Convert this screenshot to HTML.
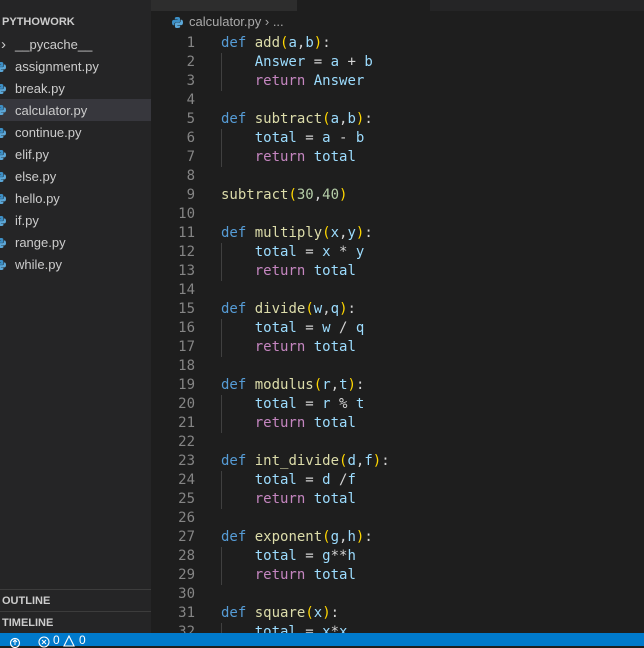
<!DOCTYPE html>
<html><head><meta charset="utf-8"><style>
*{margin:0;padding:0;box-sizing:border-box}
body{width:644px;height:646px;overflow:hidden;background:#1e1e1e;position:relative;font-family:"Liberation Sans",sans-serif}
#side{position:absolute;left:0;top:0;width:151px;height:633px;background:#252526}
.row{position:absolute;left:0;width:151px;height:22px;line-height:22px;font-size:13px;color:#cccccc;padding-left:15px;white-space:nowrap;margin-top:1px}
.row.sel{background:#37373d;margin-top:0;line-height:23px}
.hdr{position:absolute;left:2px;font-size:11px;font-weight:bold;color:#cccccc;line-height:22px}
.py{position:absolute;left:-4px;top:6px}
.line{position:absolute;left:0;width:151px;height:1px;background:#3c3c3c}
#tabs{position:absolute;left:151px;top:0;width:493px;height:11px;background:#252526}
#tab{position:absolute;left:151px;top:0;width:146px;height:11px;background:#2d2d2d}
#tab2{position:absolute;left:297px;top:0;width:133px;height:11px;background:#1e1e1e}
#crumb{position:absolute;left:172px;top:13px;font-size:13px;color:#a9a9a9;line-height:18px}
#code{position:absolute;left:0;top:34px;font-family:"DejaVu Sans Mono","Liberation Mono",monospace;font-size:14px;line-height:19px}
.n{position:absolute;width:195px;text-align:right;color:#858585;height:19px}
.c{position:absolute;left:221px;color:#d4d4d4;white-space:pre}
.k{color:#569cd6}.f{color:#dcdcaa}.v{color:#9cdcfe}.p{color:#ffd700}.r{color:#c586c0}.m{color:#b5cea8}
.g{position:absolute;left:221px;width:1px;background:#404040;margin-top:1px}
#status{position:absolute;left:0;top:633px;width:644px;height:13px;background:#007acc;color:#fff;font-size:12px}
</style></head><body>
<div id="side">
<div class="hdr" style="top:11px">PYTHOWORK</div>
<div class="row" style="top:33px"><span style="position:absolute;left:1px;color:#ccc;font-size:15px">&#8250;</span>__pycache__</div>
<div class="row" style="top:55px"><svg class="py" width="10" height="10" viewBox="0 0 10 10"><path d="M5 0C2.5 0 2.6 1 2.6 1V2.2H5.1V2.6H1.6S0 2.4 0 5s1.4 2.5 1.4 2.5h.8V6.3s0-1.4 1.4-1.4h2.4s1.3 0 1.3-1.3V1.3S7.5 0 5 0z" fill="#3c8fc6"/><path d="M5 10c2.5 0 2.4-1 2.4-1V7.8H4.9V7.4h3.5S10 7.6 10 5s-1.4-2.5-1.4-2.5h-.8v1.2s0 1.4-1.4 1.4H4s-1.3 0-1.3 1.3v2.3S2.5 10 5 10z" fill="#5ba7d8"/></svg>assignment.py</div>
<div class="row" style="top:77px"><svg class="py" width="10" height="10" viewBox="0 0 10 10"><path d="M5 0C2.5 0 2.6 1 2.6 1V2.2H5.1V2.6H1.6S0 2.4 0 5s1.4 2.5 1.4 2.5h.8V6.3s0-1.4 1.4-1.4h2.4s1.3 0 1.3-1.3V1.3S7.5 0 5 0z" fill="#3c8fc6"/><path d="M5 10c2.5 0 2.4-1 2.4-1V7.8H4.9V7.4h3.5S10 7.6 10 5s-1.4-2.5-1.4-2.5h-.8v1.2s0 1.4-1.4 1.4H4s-1.3 0-1.3 1.3v2.3S2.5 10 5 10z" fill="#5ba7d8"/></svg>break.py</div>
<div class="row sel" style="top:99px"><svg class="py" width="10" height="10" viewBox="0 0 10 10"><path d="M5 0C2.5 0 2.6 1 2.6 1V2.2H5.1V2.6H1.6S0 2.4 0 5s1.4 2.5 1.4 2.5h.8V6.3s0-1.4 1.4-1.4h2.4s1.3 0 1.3-1.3V1.3S7.5 0 5 0z" fill="#3c8fc6"/><path d="M5 10c2.5 0 2.4-1 2.4-1V7.8H4.9V7.4h3.5S10 7.6 10 5s-1.4-2.5-1.4-2.5h-.8v1.2s0 1.4-1.4 1.4H4s-1.3 0-1.3 1.3v2.3S2.5 10 5 10z" fill="#5ba7d8"/></svg>calculator.py</div>
<div class="row" style="top:121px"><svg class="py" width="10" height="10" viewBox="0 0 10 10"><path d="M5 0C2.5 0 2.6 1 2.6 1V2.2H5.1V2.6H1.6S0 2.4 0 5s1.4 2.5 1.4 2.5h.8V6.3s0-1.4 1.4-1.4h2.4s1.3 0 1.3-1.3V1.3S7.5 0 5 0z" fill="#3c8fc6"/><path d="M5 10c2.5 0 2.4-1 2.4-1V7.8H4.9V7.4h3.5S10 7.6 10 5s-1.4-2.5-1.4-2.5h-.8v1.2s0 1.4-1.4 1.4H4s-1.3 0-1.3 1.3v2.3S2.5 10 5 10z" fill="#5ba7d8"/></svg>continue.py</div>
<div class="row" style="top:143px"><svg class="py" width="10" height="10" viewBox="0 0 10 10"><path d="M5 0C2.5 0 2.6 1 2.6 1V2.2H5.1V2.6H1.6S0 2.4 0 5s1.4 2.5 1.4 2.5h.8V6.3s0-1.4 1.4-1.4h2.4s1.3 0 1.3-1.3V1.3S7.5 0 5 0z" fill="#3c8fc6"/><path d="M5 10c2.5 0 2.4-1 2.4-1V7.8H4.9V7.4h3.5S10 7.6 10 5s-1.4-2.5-1.4-2.5h-.8v1.2s0 1.4-1.4 1.4H4s-1.3 0-1.3 1.3v2.3S2.5 10 5 10z" fill="#5ba7d8"/></svg>elif.py</div>
<div class="row" style="top:165px"><svg class="py" width="10" height="10" viewBox="0 0 10 10"><path d="M5 0C2.5 0 2.6 1 2.6 1V2.2H5.1V2.6H1.6S0 2.4 0 5s1.4 2.5 1.4 2.5h.8V6.3s0-1.4 1.4-1.4h2.4s1.3 0 1.3-1.3V1.3S7.5 0 5 0z" fill="#3c8fc6"/><path d="M5 10c2.5 0 2.4-1 2.4-1V7.8H4.9V7.4h3.5S10 7.6 10 5s-1.4-2.5-1.4-2.5h-.8v1.2s0 1.4-1.4 1.4H4s-1.3 0-1.3 1.3v2.3S2.5 10 5 10z" fill="#5ba7d8"/></svg>else.py</div>
<div class="row" style="top:187px"><svg class="py" width="10" height="10" viewBox="0 0 10 10"><path d="M5 0C2.5 0 2.6 1 2.6 1V2.2H5.1V2.6H1.6S0 2.4 0 5s1.4 2.5 1.4 2.5h.8V6.3s0-1.4 1.4-1.4h2.4s1.3 0 1.3-1.3V1.3S7.5 0 5 0z" fill="#3c8fc6"/><path d="M5 10c2.5 0 2.4-1 2.4-1V7.8H4.9V7.4h3.5S10 7.6 10 5s-1.4-2.5-1.4-2.5h-.8v1.2s0 1.4-1.4 1.4H4s-1.3 0-1.3 1.3v2.3S2.5 10 5 10z" fill="#5ba7d8"/></svg>hello.py</div>
<div class="row" style="top:209px"><svg class="py" width="10" height="10" viewBox="0 0 10 10"><path d="M5 0C2.5 0 2.6 1 2.6 1V2.2H5.1V2.6H1.6S0 2.4 0 5s1.4 2.5 1.4 2.5h.8V6.3s0-1.4 1.4-1.4h2.4s1.3 0 1.3-1.3V1.3S7.5 0 5 0z" fill="#3c8fc6"/><path d="M5 10c2.5 0 2.4-1 2.4-1V7.8H4.9V7.4h3.5S10 7.6 10 5s-1.4-2.5-1.4-2.5h-.8v1.2s0 1.4-1.4 1.4H4s-1.3 0-1.3 1.3v2.3S2.5 10 5 10z" fill="#5ba7d8"/></svg>if.py</div>
<div class="row" style="top:231px"><svg class="py" width="10" height="10" viewBox="0 0 10 10"><path d="M5 0C2.5 0 2.6 1 2.6 1V2.2H5.1V2.6H1.6S0 2.4 0 5s1.4 2.5 1.4 2.5h.8V6.3s0-1.4 1.4-1.4h2.4s1.3 0 1.3-1.3V1.3S7.5 0 5 0z" fill="#3c8fc6"/><path d="M5 10c2.5 0 2.4-1 2.4-1V7.8H4.9V7.4h3.5S10 7.6 10 5s-1.4-2.5-1.4-2.5h-.8v1.2s0 1.4-1.4 1.4H4s-1.3 0-1.3 1.3v2.3S2.5 10 5 10z" fill="#5ba7d8"/></svg>range.py</div>
<div class="row" style="top:253px"><svg class="py" width="10" height="10" viewBox="0 0 10 10"><path d="M5 0C2.5 0 2.6 1 2.6 1V2.2H5.1V2.6H1.6S0 2.4 0 5s1.4 2.5 1.4 2.5h.8V6.3s0-1.4 1.4-1.4h2.4s1.3 0 1.3-1.3V1.3S7.5 0 5 0z" fill="#3c8fc6"/><path d="M5 10c2.5 0 2.4-1 2.4-1V7.8H4.9V7.4h3.5S10 7.6 10 5s-1.4-2.5-1.4-2.5h-.8v1.2s0 1.4-1.4 1.4H4s-1.3 0-1.3 1.3v2.3S2.5 10 5 10z" fill="#5ba7d8"/></svg>while.py</div>
<div class="line" style="top:589px"></div>
<div class="hdr" style="top:590px">OUTLINE</div>
<div class="line" style="top:611px"></div>
<div class="hdr" style="top:612px">TIMELINE</div>
</div>
<div id="tabs"></div><div id="tab"></div><div id="tab2"></div>
<div id="crumb"><svg width="11" height="11" viewBox="0 0 10 10" style="position:absolute;left:0;top:4px"><path d="M5 0C2.5 0 2.6 1 2.6 1V2.2H5.1V2.6H1.6S0 2.4 0 5s1.4 2.5 1.4 2.5h.8V6.3s0-1.4 1.4-1.4h2.4s1.3 0 1.3-1.3V1.3S7.5 0 5 0z" fill="#3c8fc6"/><path d="M5 10c2.5 0 2.4-1 2.4-1V7.8H4.9V7.4h3.5S10 7.6 10 5s-1.4-2.5-1.4-2.5h-.8v1.2s0 1.4-1.4 1.4H4s-1.3 0-1.3 1.3v2.3S2.5 10 5 10z" fill="#5ba7d8"/></svg><span style="margin-left:17px">calculator.py &#8250; ...</span></div>
<div class="g" style="top:52px;height:38px"></div>
<div class="g" style="top:128px;height:38px"></div>
<div class="g" style="top:242px;height:38px"></div>
<div class="g" style="top:318px;height:38px"></div>
<div class="g" style="top:394px;height:38px"></div>
<div class="g" style="top:470px;height:38px"></div>
<div class="g" style="top:546px;height:38px"></div>
<div class="g" style="top:622px;height:10px"></div>
<div id="code">
<div class="n" style="top:0">1</div><div class="c" style="top:0"><span class="k">def</span> <span class="f">add</span><span class="p">(</span><span class="v">a</span>,<span class="v">b</span><span class="p">)</span>:</div>
<div class="n" style="top:19px">2</div><div class="c" style="top:19px">    <span class="v">Answer</span> = <span class="v">a</span> + <span class="v">b</span></div>
<div class="n" style="top:38px">3</div><div class="c" style="top:38px">    <span class="r">return</span> <span class="v">Answer</span></div>
<div class="n" style="top:57px">4</div>
<div class="n" style="top:76px">5</div><div class="c" style="top:76px"><span class="k">def</span> <span class="f">subtract</span><span class="p">(</span><span class="v">a</span>,<span class="v">b</span><span class="p">)</span>:</div>
<div class="n" style="top:95px">6</div><div class="c" style="top:95px">    <span class="v">total</span> = <span class="v">a</span> - <span class="v">b</span></div>
<div class="n" style="top:114px">7</div><div class="c" style="top:114px">    <span class="r">return</span> <span class="v">total</span></div>
<div class="n" style="top:133px">8</div>
<div class="n" style="top:152px">9</div><div class="c" style="top:152px"><span class="f">subtract</span><span class="p">(</span><span class="m">30</span>,<span class="m">40</span><span class="p">)</span></div>
<div class="n" style="top:171px">10</div>
<div class="n" style="top:190px">11</div><div class="c" style="top:190px"><span class="k">def</span> <span class="f">multiply</span><span class="p">(</span><span class="v">x</span>,<span class="v">y</span><span class="p">)</span>:</div>
<div class="n" style="top:209px">12</div><div class="c" style="top:209px">    <span class="v">total</span> = <span class="v">x</span> * <span class="v">y</span></div>
<div class="n" style="top:228px">13</div><div class="c" style="top:228px">    <span class="r">return</span> <span class="v">total</span></div>
<div class="n" style="top:247px">14</div>
<div class="n" style="top:266px">15</div><div class="c" style="top:266px"><span class="k">def</span> <span class="f">divide</span><span class="p">(</span><span class="v">w</span>,<span class="v">q</span><span class="p">)</span>:</div>
<div class="n" style="top:285px">16</div><div class="c" style="top:285px">    <span class="v">total</span> = <span class="v">w</span> / <span class="v">q</span></div>
<div class="n" style="top:304px">17</div><div class="c" style="top:304px">    <span class="r">return</span> <span class="v">total</span></div>
<div class="n" style="top:323px">18</div>
<div class="n" style="top:342px">19</div><div class="c" style="top:342px"><span class="k">def</span> <span class="f">modulus</span><span class="p">(</span><span class="v">r</span>,<span class="v">t</span><span class="p">)</span>:</div>
<div class="n" style="top:361px">20</div><div class="c" style="top:361px">    <span class="v">total</span> = <span class="v">r</span> % <span class="v">t</span></div>
<div class="n" style="top:380px">21</div><div class="c" style="top:380px">    <span class="r">return</span> <span class="v">total</span></div>
<div class="n" style="top:399px">22</div>
<div class="n" style="top:418px">23</div><div class="c" style="top:418px"><span class="k">def</span> <span class="f">int_divide</span><span class="p">(</span><span class="v">d</span>,<span class="v">f</span><span class="p">)</span>:</div>
<div class="n" style="top:437px">24</div><div class="c" style="top:437px">    <span class="v">total</span> = <span class="v">d</span> /<span class="v">f</span></div>
<div class="n" style="top:456px">25</div><div class="c" style="top:456px">    <span class="r">return</span> <span class="v">total</span></div>
<div class="n" style="top:475px">26</div>
<div class="n" style="top:494px">27</div><div class="c" style="top:494px"><span class="k">def</span> <span class="f">exponent</span><span class="p">(</span><span class="v">g</span>,<span class="v">h</span><span class="p">)</span>:</div>
<div class="n" style="top:513px">28</div><div class="c" style="top:513px">    <span class="v">total</span> = <span class="v">g</span>**<span class="v">h</span></div>
<div class="n" style="top:532px">29</div><div class="c" style="top:532px">    <span class="r">return</span> <span class="v">total</span></div>
<div class="n" style="top:551px">30</div>
<div class="n" style="top:570px">31</div><div class="c" style="top:570px"><span class="k">def</span> <span class="f">square</span><span class="p">(</span><span class="v">x</span><span class="p">)</span>:</div>
<div class="n" style="top:589px">32</div><div class="c" style="top:589px">    <span class="v">total</span> = <span class="v">x</span>*<span class="v">x</span></div>
</div>
<div id="status">
<svg width="12" height="12" viewBox="0 0 12 12" style="position:absolute;left:9px;top:3px"><circle cx="6" cy="7" r="4.5" fill="none" stroke="#fff" stroke-width="1.2"/><path d="M6 4v5M4 6l2-2 2 2" stroke="#fff" fill="none"/></svg>
<svg width="12" height="12" viewBox="0 0 12 12" style="position:absolute;left:38px;top:3px"><circle cx="6" cy="6" r="5" fill="none" stroke="#fff" stroke-width="1.1"/><path d="M4 4l4 4M8 4l-4 4" stroke="#fff"/></svg>
<span style="position:absolute;left:53px;top:1px;line-height:13px">0</span>
<svg width="12" height="12" viewBox="0 0 12 12" style="position:absolute;left:63px;top:2px"><path d="M6 1L11 11H1Z" fill="none" stroke="#fff" stroke-width="1.1"/></svg>
<span style="position:absolute;left:79px;top:1px;line-height:13px">0</span>
</div>
</body></html>
